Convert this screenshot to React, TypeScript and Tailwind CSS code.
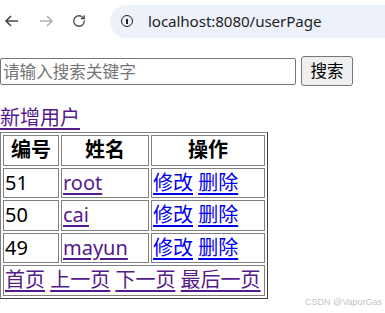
import React, { useState } from "react";
import { RotateCw } from "lucide-react";

const users = [
  { id: 51, name: "root" },
  { id: 50, name: "cai" },
  { id: 49, name: "mayun" },
];

const cell = "border border-[#808080] p-[1px] h-[30.5px] align-middle";

const App = () => {
  const [keyword, setKeyword] = useState("");

  return (
    <div className="w-[385px] h-[313px] bg-white overflow-hidden relative font-['Noto_Sans','Noto_Sans_CJK_SC',sans-serif]">
      {/* browser bar */}
      <div className="h-[44px] flex items-center">
        <div className="w-[110px] flex items-center h-[33px] -mt-[2px]">
          <svg width="24" height="24" viewBox="0 0 24 24" className="-ml-[1px]">
            <path d="M7 12h12M12 7l-5 5 5 5" fill="none" stroke="#474747" strokeWidth="1.6" />
          </svg>
          <svg width="24" height="24" viewBox="0 0 24 24" className="ml-[12px]">
            <path d="M5 12h12M12 7l5 5-5 5" fill="none" stroke="#b0b0b0" strokeWidth="1.6" />
          </svg>
          <RotateCw size={14} strokeWidth={2.2} color="#474747" className="ml-[13px]" />
        </div>
        <div className="flex-1 h-[33px] -mt-[2px] bg-[#edf2fa] rounded-l-full flex items-center">
          <div className="ml-[11px] w-[12px] h-[12px] rounded-full border-[1.6px] border-[#1f1f1f] flex items-center justify-center">
            <div className="w-[1.6px] h-[5px] bg-[#1f1f1f] mt-[1px]"></div>
          </div>
          <span className="ml-[15px] text-[15.2px] text-[#1f1f1f] tracking-[-0.1px]">localhost:8080/userPage</span>
        </div>
      </div>

      {/* search */}
      <form
        onSubmit={(e) => e.preventDefault()}
        className="mt-[12px] flex items-center h-[30px]"
      >
        <input
          type="text"
          value={keyword}
          onChange={(e) => setKeyword(e.target.value)}
          placeholder="请输入搜索关键字"
          className="w-[296px] h-[27px] border border-[#767676] rounded-[2px] pl-[2px] text-[16.6px] leading-[25px] outline-none placeholder:text-[#757575]"
        />
        <button
          type="submit"
          className="ml-[5px] w-[52px] h-[30px] border border-[#767676] rounded-[3px] bg-[#efefef] text-[16.6px] leading-[26px] text-black"
        >
          搜索
        </button>
      </form>

      <div className="mt-[18px] h-[28px] leading-[28px] text-[20px]">
        <a href="#" className="text-[#551a8b] underline underline-offset-[3px]">
          新增用户
        </a>
      </div>

      <table className="table-fixed w-[268px] border-separate border-spacing-[2px] border border-[#808080] border-r-[#404040] border-b-[#404040] text-[20px] leading-[26px]">
        <thead>
          <tr>
            <th className={cell + " w-[56px] font-bold text-center"}>编号</th>
            <th className={cell + " w-[88px] font-bold text-center"}>姓名</th>
            <th className={cell + " w-[114px] font-bold text-center"}>操作</th>
          </tr>
        </thead>
        <tbody>
          {users.map((u) => (
            <tr key={u.id}>
              <td className={cell + " text-left"}>{u.id}</td>
              <td className={cell + " text-left"}>
                <a href="#" className="text-[#551a8b] underline underline-offset-[3px]">
                  {u.name}
                </a>
              </td>
              <td className={cell + " text-left whitespace-nowrap"}>
                <a href="#" className="text-[#0000ee] underline underline-offset-[3px]">修改</a>{" "}
                <a href="#" className="text-[#0000ee] underline underline-offset-[3px]">删除</a>
              </td>
            </tr>
          ))}
          <tr>
            <td colSpan={3} className={cell + " text-left whitespace-nowrap"}>
              <a href="#" className="text-[#551a8b] underline underline-offset-[3px]">首页</a>{" "}
              <a href="#" className="text-[#551a8b] underline underline-offset-[3px]">上一页</a>{" "}
              <a href="#" className="text-[#551a8b] underline underline-offset-[3px]">下一页</a>{" "}
              <a href="#" className="text-[#551a8b] underline underline-offset-[3px]">最后一页</a>
            </td>
          </tr>
        </tbody>
      </table>

      <div className="absolute right-[3px] bottom-[6px] text-[9px] leading-[10px] text-[#c4c4c4] font-['Liberation_Sans',sans-serif]">
        CSDN @VaporGas
      </div>
    </div>
  );
};

export default App;
